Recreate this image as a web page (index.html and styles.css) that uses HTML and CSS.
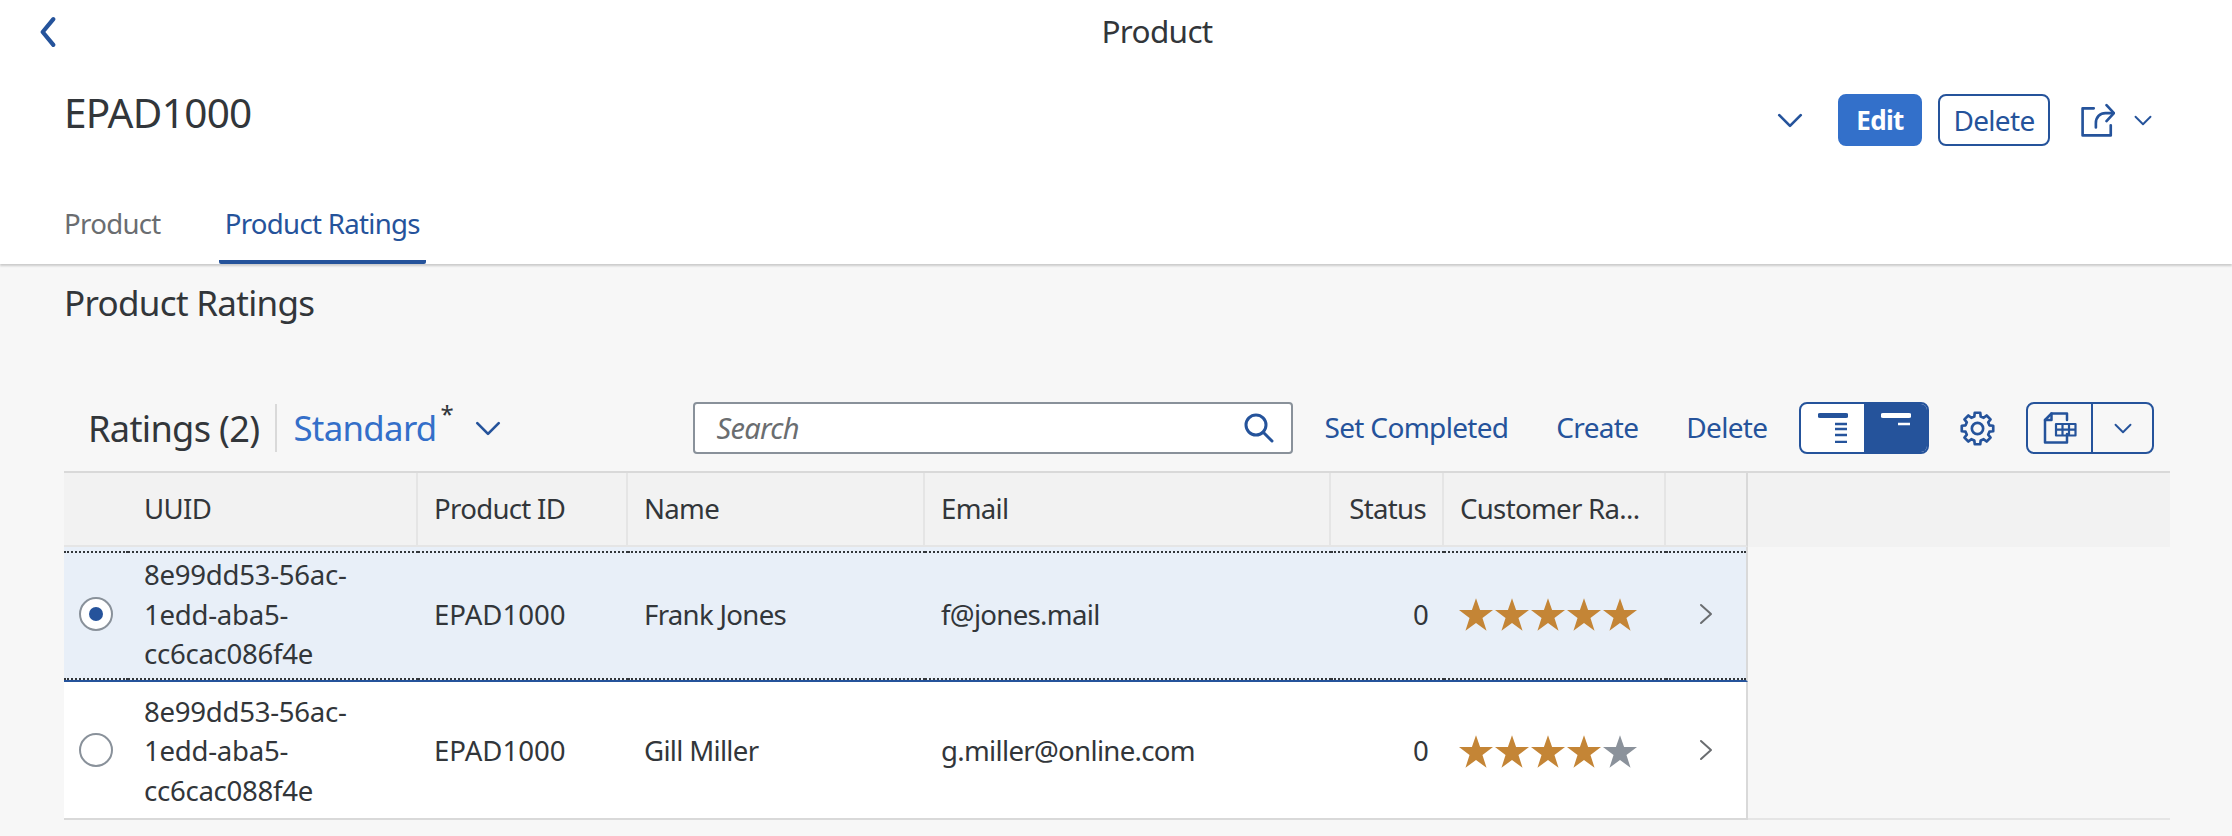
FILE: index.html
```html
<!DOCTYPE html>
<html lang="en">
<head>
  <meta charset="UTF-8">
  <title>Product</title>
  <link rel="stylesheet" href="styles.css">
</head>
<body>
  <svg class="defs" width="0" height="0">
    <symbol id="star" viewBox="0 0 100 96">
      <polygon points="50,0 62,35 100,35 69,58 81,96 50,73 19,96 31,58 0,35 38,35"/>
    </symbol>
    <symbol id="chevron-down" viewBox="0 0 24 14">
      <path d="M2 2 L12 12 L22 2"/>
    </symbol>
    <symbol id="chevron-right" viewBox="0 0 14 22">
      <path d="M2 2 L12 11 L2 20"/>
    </symbol>
  </svg>

  <header class="object-header">
    <div class="nav-bar">
      <svg class="back-icon" viewBox="0 0 16 30"><path d="M13 3 L3 15 L13 27"/></svg>
      <div class="nav-title">Product</div>
    </div>
    <div class="title-row">
      <h1>EPAD1000</h1>
      <div class="actions">
        <svg class="chev chev-lg"><use href="#chevron-down"/></svg>
        <button class="btn btn-primary">Edit</button>
        <button class="btn">Delete</button>
        <svg class="share-icon" viewBox="0 0 32 32">
          <path d="M12 5 H1.500 V30.500 H28 V21"/>
          <path d="M14 23 V19 C14 13 18 9.500 23 9.500 H30"/>
          <path d="M24 2 L31 9.500 L24 17"/>
        </svg>
        <svg class="chev chev-sm"><use href="#chevron-down"/></svg>
      </div>
    </div>
    <nav class="tabs">
      <a class="tab">Product</a>
      <a class="tab tab-active">Product Ratings</a>
    </nav>
  </header>

  <main class="content">
    <h2>Product Ratings</h2>

    <div class="toolbar">
      <span class="table-title">Ratings (2)</span>
      <span class="variant">Standard<sup>*</sup></span>
      <svg class="chev chev-lg"><use href="#chevron-down"/></svg>
      <div class="search">
        <span class="search-text">Search</span>
        <svg class="search-icon" viewBox="0 0 30 30">
          <circle cx="12" cy="12" r="10"/>
          <path d="M19 19 L28 28"/>
        </svg>
      </div>
      <a class="tool-link">Set Completed</a>
      <a class="tool-link">Create</a>
      <a class="tool-link">Delete</a>
      <div class="segmented">
        <span class="seg">
          <svg class="seg-icon" viewBox="0 0 30 30">
            <path class="thick" d="M2 2.500 H28"/>
            <path d="M17 11 H29 M17 16 H29 M17 22 H29 M17 29 H29"/>
          </svg>
        </span>
        <span class="seg seg-on">
          <svg class="seg-icon" viewBox="0 0 30 30">
            <path class="thick" d="M2 2.500 H28"/>
            <path d="M17 11 H29"/>
          </svg>
        </span>
      </div>
      <svg class="gear-icon" viewBox="-2 -2 36 36">
        <path d="M12.900 4.400 L13.300 .7 H18.700 L19.100 4.400 L22 5.610 L24.890 3.300 L28.700 7.110 L26.390 10 L27.600 12.900 L31.300 13.300 V18.700 L27.600 19.100 L26.390 22 L28.700 24.890 L24.890 28.700 L22 26.390 L19.100 27.600 L18.700 31.300 H13.300 L12.900 27.600 L10 26.390 L7.110 28.700 L3.300 24.890 L5.610 22 L4.400 19.100 L.7 18.700 V13.300 L4.400 12.900 L5.610 10 L3.300 7.110 L7.110 3.300 L10 5.610 Z"/>
        <circle cx="16" cy="16" r="5.500"/>
      </svg>
      <div class="split-btn">
        <span class="split-main">
          <svg class="export-icon" viewBox="0 0 34 32">
            <path d="M24 22 V30.500 H2 V8 L8.500 1.500 H24 V8"/>
            <path d="M2 8 H8.500 V1.500"/>
            <path class="grid" d="M13 12 H32.500 V23.500 H13 Z M13 17.700 H32.500 M19.500 12 V23.500 M26 12 V23.500"/>
          </svg>
        </span>
        <span class="split-arrow"><svg class="chev chev-sm"><use href="#chevron-down"/></svg></span>
      </div>
    </div>

    <div class="table-wrap">
      <table class="ratings">
        <colgroup>
          <col class="c-select"><col class="c-uuid"><col class="c-product"><col class="c-name">
          <col class="c-email"><col class="c-status"><col class="c-rating"><col class="c-nav">
        </colgroup>
        <thead>
          <tr>
            <th class="no-divider"></th>
            <th>UUID</th>
            <th>Product ID</th>
            <th>Name</th>
            <th>Email</th>
            <th class="right">Status</th>
            <th>Customer Ra...</th>
            <th class="last"></th>
          </tr>
        </thead>
        <tbody>
          <tr class="selected">
            <td class="center"><span class="radio radio-on"></span></td>
            <td class="code">8e99dd53-56ac-<br>1edd-aba5-<br>cc6cac086f4e</td>
            <td class="code-id">EPAD1000</td>
            <td>Frank Jones</td>
            <td>f@jones.mail</td>
            <td class="right">0</td>
            <td>
              <div class="stars">
                <svg class="star"><use href="#star"/></svg>
                <svg class="star"><use href="#star"/></svg>
                <svg class="star"><use href="#star"/></svg>
                <svg class="star"><use href="#star"/></svg>
                <svg class="star"><use href="#star"/></svg>
              </div>
            </td>
            <td class="center last"><svg class="row-nav"><use href="#chevron-right"/></svg></td>
          </tr>
          <tr>
            <td class="center"><span class="radio"></span></td>
            <td class="code">8e99dd53-56ac-<br>1edd-aba5-<br>cc6cac088f4e</td>
            <td class="code-id">EPAD1000</td>
            <td>Gill Miller</td>
            <td>g.miller@online.com</td>
            <td class="right">0</td>
            <td>
              <div class="stars">
                <svg class="star"><use href="#star"/></svg>
                <svg class="star"><use href="#star"/></svg>
                <svg class="star"><use href="#star"/></svg>
                <svg class="star"><use href="#star"/></svg>
                <svg class="star star-off"><use href="#star"/></svg>
              </div>
            </td>
            <td class="center last"><svg class="row-nav"><use href="#chevron-right"/></svg></td>
          </tr>
        </tbody>
      </table>
      <div class="filler"><div class="filler-head"></div></div>
    </div>
  </main>
</body>
</html>
```

FILE: styles.css
```css
body {
  font-family: 'Noto Sans', sans-serif;
  background-color: #f7f7f7;
  margin: 0;
  color: #32363a;
  font-size: 27.6px;
  letter-spacing: -0.025em;
}
svg {
  display: block;
  fill: none;
  stroke: #25539b;
  stroke-width: 2.5;
  stroke-linecap: round;
  stroke-linejoin: round;
  flex: none;
}
.defs {
  position: absolute;
}

/* header */
.object-header {
  background-color: #fff;
  height: 264px;
  box-shadow: 0 2px 2px rgba(0,0,0,0.18);
  position: relative;
}
.nav-bar {
  height: 64px;
  display: flex;
  align-items: center;
  justify-content: center;
  position: relative;
}
.back-icon {
  position: absolute;
  left: 39px;
  top: 16px;
  width: 18px;
  height: 32px;
  stroke-width: 4;
}
.nav-title {
  font-size: 31.5px;
  margin-left: 82px;
  padding-bottom: 3px;
}
.title-row {
  height: 112px;
  padding: 0 80px 0 64px;
  display: flex;
  justify-content: space-between;
}
h1 {
  font-size: 40.500px;
  font-weight: 400;
  margin: 0;
  line-height: 98px;
}
.actions {
  display: flex;
  align-items: center;
  height: 52px;
  margin-top: 30px;
}
.chev {
  stroke-width: 2.5;
}
.chev-lg {
  width: 26px;
  height: 15px;
}
.chev-sm {
  width: 18px;
  height: 11px;
}
.actions .chev-lg {
  margin-right: 35px;
}
.btn {
  font: inherit;
  font-size: 28px;
  letter-spacing: inherit;
  height: 52px;
  background: #fff;
  color: #25539b;
  border: 2px solid #25539b;
  border-radius: 8px;
  padding: 0;
  width: 112px;
  margin-right: 16px;
}
.btn-primary {
  width: 84px;
  background: #3370ca;
  border-color: #3370ca;
  color: #fff;
  font-size: 26px;
  font-weight: 700;
}
.share-icon {
  width: 34px;
  height: 34px;
  margin: 0 19px 0 15px;
}
.tabs {
  display: flex;
  padding-left: 64px;
  gap: 64px;
}
.tab {
  color: #6a6d70;
  line-height: 95px;
  height: 88px;
  box-sizing: border-box;
}
.tab-active {
  color: #25539b;
  border-bottom: 4px solid #25539b;
  border-radius: 2px;
  padding: 0 6px;
  margin-left: -6px;
}

/* section */
.content {
  padding: 0 62px 0 64px;
}
h2 {
  font-size: 35px;
  font-weight: 400;
  margin: 0;
  line-height: 78px;
}
.toolbar {
  height: 52px;
  margin-top: 60px;
  padding: 0 16px 0 24px;
  display: flex;
  align-items: center;
  margin-bottom: 17px;
  white-space: nowrap;
}
.toolbar > * {
  flex: none;
}
.table-title {
  font-size: 36.200px;
  padding-right: 16px;
  border-right: 2px solid #d9d9d9;
  line-height: 48px;
}
.variant {
  font-size: 34.800px;
  color: #346fc9;
  margin-left: 16px;
  margin-right: 38px;
  padding-bottom: 2px;
  position: relative;
}
.variant sup {
  position: absolute;
  left: 100%;
  top: -4px;
  margin-left: 4px;
  color: #32363a;
  font-size: 24px;
  line-height: 1.2;
}
.search {
  margin-left: 192px;
  width: 600px;
  height: 52px;
  box-sizing: border-box;
  background: #fff;
  border: 2px solid #89919a;
  border-radius: 4px;
  padding: 0 17px 0 22px;
  display: flex;
  align-items: center;
  justify-content: space-between;
}
.search-text {
  color: #6a6d70;
  font-size: 29px;
  font-style: italic;
  padding-bottom: 2px;
}
.search-icon {
  width: 30px;
  height: 30px;
  stroke-width: 3;
}
.tool-link {
  color: #25539b;
  font-size: 28px;
  margin-left: 48px;
  padding-bottom: 2px;
}
.search + .tool-link {
  margin-left: 32px;
}
.segmented {
  margin-left: 32px;
  display: flex;
  width: 130px;
  height: 52px;
  box-sizing: border-box;
  border: 2px solid #25539b;
  border-radius: 8px;
  background: #fff;
  overflow: hidden;
}
.seg {
  flex: 1;
  display: flex;
  align-items: center;
  justify-content: center;
}
.seg-on {
  background: #25539b;
}
.seg-icon {
  width: 30px;
  height: 30px;
  stroke-width: 2.5;
  stroke-linecap: butt;
}
.seg-icon .thick {
  stroke-width: 5;
  stroke-linecap: round;
}
.seg-on .seg-icon {
  stroke: #fff;
}
.gear-icon {
  width: 37px;
  height: 37px;
  margin-left: 30px;
  stroke-width: 2.6;
}
.split-btn {
  margin-left: 30px;
  width: 128px;
  height: 52px;
  box-sizing: border-box;
  border: 2px solid #25539b;
  border-radius: 8px;
  display: flex;
}
.split-main {
  width: 63px;
  border-right: 2px solid #25539b;
  display: flex;
  align-items: center;
  justify-content: center;
}
.split-arrow {
  flex: 1;
  display: flex;
  align-items: center;
  justify-content: center;
}
.export-icon {
  width: 34px;
  height: 32px;
}
.export-icon .grid {
  stroke-width: 2.2;
}

/* table */
.table-wrap {
  display: flex;
  border-top: 2px solid #d9d9d9;
}
.ratings {
  table-layout: fixed;
  border-collapse: separate;
  border-spacing: 0;
  width: 1684px;
  flex: none;
}
.c-select { width: 64px; }
.c-uuid { width: 290px; }
.c-product { width: 210px; }
.c-name { width: 297px; }
.c-email { width: 406px; }
.c-status { width: 113px; }
.c-rating { width: 222px; }
.c-nav { width: 82px; }
th {
  height: 74px;
  box-sizing: border-box;
  background: #f2f2f2;
  font-weight: 400;
  text-align: left;
  padding: 0 16px 2px;
  border-right: 2px solid #e5e5e5;
  border-bottom: 2px solid #e5e5e5;
  white-space: nowrap;
}
th.no-divider {
  border-right: 0;
}
th.last,
td.last {
  border-right: 2px solid #d9d9d9;
}
td {
  height: 138px;
  box-sizing: border-box;
  background: #fff;
  padding: 2px 16px 0;
  line-height: 39.500px;
  border-bottom: 2px solid #d9d9d9;
}
.selected td {
  height: 135px;
  background: #e8eff8;
  border-bottom-color: #25539b;
  position: relative;
}
.selected td::after {
  content: "";
  position: absolute;
  left: 0;
  right: 0;
  top: 4px;
  bottom: 0;
  border-top: 2px dotted #32363a;
  border-bottom: 2px dotted #32363a;
}
.code {
  letter-spacing: -0.01em;
}
.code-id {
  letter-spacing: 0;
}
.right {
  text-align: right;
}
.center {
  padding: 0;
}
.radio {
  display: block;
  width: 34px;
  height: 34px;
  box-sizing: border-box;
  margin: 0 auto 0 15px;
  border: 2px solid #89919a;
  border-radius: 50%;
  background: #fff;
  position: relative;
}
.radio-on::after {
  content: "";
  position: absolute;
  left: 8px;
  top: 8px;
  width: 14px;
  height: 14px;
  border-radius: 50%;
  background: #25539b;
}
.stars {
  display: flex;
  gap: 2px;
  margin-left: -1px;
}
.star {
  width: 34px;
  height: 33px;
  fill: #c48536;
  stroke: none;
}
.star-off {
  fill: #8b929b;
}
.row-nav {
  width: 14px;
  height: 22px;
  margin-left: 33px;
  stroke: #6a6d70;
  stroke-width: 2;
}
.filler {
  flex: 1;
  border-bottom: 2px solid #e5e5e5;
}
.filler-head {
  height: 74px;
  background: #f2f2f2;
}
```
